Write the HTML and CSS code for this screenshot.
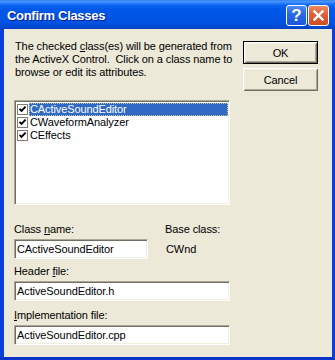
FILE: index.html
```html
<!DOCTYPE html>
<html>
<head>
<meta charset="utf-8">
<title>Confirm Classes</title>
<link rel="stylesheet" href="styles.css">
</head>
<body>
<div class="window">
  <div class="titlebar">
    <span class="title">Confirm Classes</span>
    <div class="caption-buttons">
      <span class="cap-btn help">?</span>
      <span class="cap-btn close"><svg width="19" height="19" viewBox="0 0 19 19"><path d="M5.5 5.5 L13.5 13.5 M13.5 5.5 L5.5 13.5" stroke="#fff" stroke-width="2.4" stroke-linecap="square"/></svg></span>
    </div>
  </div>
  <div class="frame">
    <div class="main">
      <p class="intro">The checked <u>c</u>lass(es) will be generated from<br>the ActiveX Control.&nbsp; Click on a class name to<br>browse or edit its attributes.</p>
      <div class="listbox sunken">
        <div class="item selected">
          <svg class="chk" width="11" height="11" viewBox="0 0 11 11"><rect x="0.5" y="0.5" width="10" height="10" fill="#fff" stroke="#7f7d72"/><path d="M2.5 4.8 L4.5 6.8 L8.6 2.7" fill="none" stroke="#000" stroke-width="1.9"/></svg>
          <span class="text">CActiveSoundEditor</span>
        </div>
        <div class="item">
          <svg class="chk" width="11" height="11" viewBox="0 0 11 11"><rect x="0.5" y="0.5" width="10" height="10" fill="#fff" stroke="#7f7d72"/><path d="M2.5 4.8 L4.5 6.8 L8.6 2.7" fill="none" stroke="#000" stroke-width="1.9"/></svg>
          <span class="text">CWaveformAnalyzer</span>
        </div>
        <div class="item">
          <svg class="chk" width="11" height="11" viewBox="0 0 11 11"><rect x="0.5" y="0.5" width="10" height="10" fill="#fff" stroke="#7f7d72"/><path d="M2.5 4.8 L4.5 6.8 L8.6 2.7" fill="none" stroke="#000" stroke-width="1.9"/></svg>
          <span class="text">CEffects</span>
        </div>
      </div>
      <div class="classgrid">
        <span class="lbl">Class <u>n</u>ame:</span>
        <span class="lbl">Base class:</span>
        <div class="edit sunken short">CActiveSoundEditor</div>
        <span class="static">CWnd</span>
      </div>
      <div class="lbl header-lbl">Header <u>f</u>ile:</div>
      <div class="edit sunken field">ActiveSoundEditor.h</div>
      <div class="lbl impl-lbl"><u>I</u>mplementation file:</div>
      <div class="edit sunken field">ActiveSoundEditor.cpp</div>
    </div>
    <div class="side">
      <button class="btn default">OK</button>
      <button class="btn">Cancel</button>
    </div>
  </div>
</div>
</body>
</html>
```

FILE: styles.css
```css
html, body {
  margin: 0;
  padding: 0;
  background: #ffffff;
}

body {
  font-family: "Liberation Sans", Arial, sans-serif;
  font-size: 11px;
  letter-spacing: -0.1px;
  color: #000;
}

.window {
  width: 335px;
  height: 360px;
  display: flex;
  flex-direction: column;
}

.titlebar {
  height: 29px;
  flex: none;
  display: flex;
  justify-content: space-between;
  align-items: flex-start;
  background: linear-gradient(to bottom,
    #2a6ff0 0px, #4d9bff 1px, #2f82ff 3px, #0e66f2 5px,
    #0058e8 9px, #0055e5 16px, #0052e0 23px, #0049d2 27px, #003fbf 29px);
}

.title {
  margin: 8px 0 0 7px;
  color: #fff;
  font-weight: bold;
  font-size: 13px;
  letter-spacing: -0.3px;
  line-height: 16px;
  text-shadow: 1px 1px 0 #0a1d8f;
}

.caption-buttons {
  display: flex;
  gap: 1px;
  margin: 5px 6px 0 0;
}

.cap-btn {
  width: 21px;
  height: 21px;
  box-sizing: border-box;
  border: 1px solid #fff;
  border-radius: 3px;
  display: flex;
  align-items: center;
  justify-content: center;
}

.help {
  background: linear-gradient(to bottom, #4f8cf5 0%, #2a68ea 40%, #1c56dc 100%);
  color: #fff;
  font-weight: bold;
  font-size: 17px;
  line-height: 19px;
  letter-spacing: 0;
}

.close {
  background: linear-gradient(to bottom, #ec8a66 0%, #e2623a 40%, #cf4a20 100%);
}

.frame {
  flex: 1;
  min-height: 0;
  display: flex;
  gap: 13px;
  background: #ece9d8;
  border-left: 4px solid #0a3fd9;
  border-right: 3px solid #0a3fd9;
  border-bottom: 3px solid #0a34c8;
  padding: 11px 14px 0 10px;
}

.main {
  width: 216px;
  flex: none;
}

.intro {
  margin: 0 0 0 1px;
  line-height: 13px;
  white-space: nowrap;
}

.sunken {
  box-sizing: border-box;
  background: #fff;
  border: 1px solid;
  border-color: #aca899 #ffffff #ffffff #aca899;
  box-shadow: inset 1px 1px 0 #716f64, inset -1px -1px 0 #f1efe2;
}

.listbox {
  margin-top: 21px;
  height: 105px;
  padding: 2px 1px 1px 1px;
}

.item {
  display: flex;
  align-items: center;
  height: 13px;
}

.chk {
  flex: none;
  margin-left: 1px;
  margin-right: 1px;
}

.item .text {
  flex: 1;
  height: 13px;
  line-height: 13px;
  padding-left: 1px;
  box-sizing: border-box;
  white-space: nowrap;
}

.item.selected .text {
  background: #316ac5;
  color: #fff;
  outline: 1px dotted #c8c8a0;
  outline-offset: -1px;
}

.lbl {
  line-height: 13px;
  white-space: nowrap;
}

.classgrid {
  margin-top: 18px;
  display: grid;
  grid-template-columns: 134px auto;
  column-gap: 17px;
  row-gap: 3px;
  align-items: center;
}

.edit {
  height: 20px;
  line-height: 18px;
  padding-left: 2px;
  white-space: nowrap;
}

.static {
  padding-left: 1px;
  line-height: 13px;
}

.header-lbl {
  margin-top: 6px;
}

.impl-lbl {
  margin-top: 8px;
}

.field {
  margin-top: 3px;
}

.side {
  width: 75px;
  flex: none;
  margin-top: 1px;
  display: flex;
  flex-direction: column;
  gap: 4px;
}

.btn {
  width: 75px;
  height: 23px;
  box-sizing: border-box;
  margin: 0;
  padding: 0;
  font-family: inherit;
  font-size: 11px;
  letter-spacing: -0.1px;
  color: #000;
  background: #ece9d8;
  border: none;
  box-shadow: inset 1px 1px 0 #ffffff, inset -1px -1px 0 #716f64,
              inset 2px 2px 0 #f1efe2, inset -2px -2px 0 #aca899;
}

.btn.default {
  border: 1px solid #000;
}
```
